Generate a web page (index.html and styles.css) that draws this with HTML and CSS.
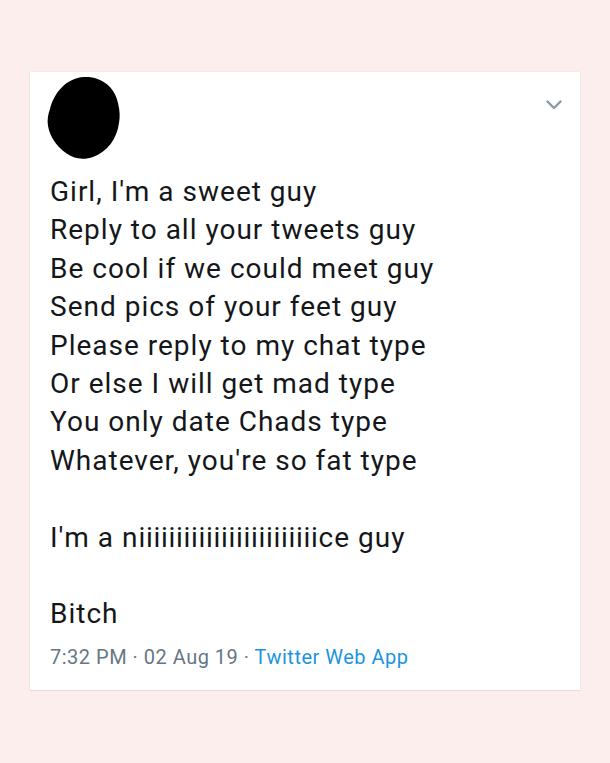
FILE: index.html
```html
<!DOCTYPE html>
<html>
<head>
<meta charset="utf-8">
<link rel="stylesheet" href="styles.css">
</head>
<body>
<div class="card">
  <div class="head">
    <svg class="avatar" width="75" height="84" viewBox="0 0 75 84">
      <path d="M37 1 C54 0 68 11 71 27 C73 35 73 41 72 47 C70 63 60 76 46 81 C38 84 30 83 24 80 C12 74 3 62 1 50 C0 44 1 38 3 33 C7 17 19 2 37 1 Z" fill="#000"/>
    </svg>
    <svg class="chevron" width="16" height="10" viewBox="0 0 16 10">
      <path d="M1.5 1.5 L8 8 L14.5 1.5" fill="none" stroke="#8899a6" stroke-width="2.4" stroke-linecap="round" stroke-linejoin="round"/>
    </svg>
  </div>
  <div class="tweet">
    <p>Girl, I'm a sweet guy</p>
    <p>Reply to all your tweets guy</p>
    <p>Be cool if we could meet guy</p>
    <p>Send pics of your feet guy</p>
    <p>Please reply to my chat type</p>
    <p>Or else I will get mad type</p>
    <p>You only date Chads type</p>
    <p>Whatever, you're so fat type</p>
    <p class="blank">&nbsp;</p>
    <p>I'm a n<span class="ii">iiiiiiiiiiiiiiiiiiiiiiii</span>ce guy</p>
    <p class="blank">&nbsp;</p>
    <p>Bitch</p>
  </div>
  <div class="meta">7:32 PM · 02 Aug 19 · <span class="source">Twitter Web App</span></div>
</div>
</body>
</html>
```
FILE: styles.css
```css
html, body {
  margin: 0;
  padding: 0;
}
body {
  background: #fdeeee;
  width: 610px;
  height: 763px;
  font-family: Roboto, "Liberation Sans", sans-serif;
  padding-top: 72px;
  box-sizing: border-box;
}
.card {
  margin-left: 30px;
  width: 550px;
  height: 618px;
  background: #ffffff;
  box-shadow: 0 0 1px rgba(0,0,0,0.12), 0 1px 1px rgba(0,0,0,0.06);
  box-sizing: border-box;
  padding: 4px 20px 0 20px;
}
.head {
  display: flex;
  justify-content: space-between;
  align-items: flex-start;
  height: 84px;
}
.avatar {
  display: block;
  margin-left: -3px;
}
.chevron {
  display: block;
  margin-top: 24px;
  margin-right: -2px;
}
.tweet {
  margin-top: 13px;
  color: #14171a;
  font-size: 28px;
  line-height: 38.4px;
  letter-spacing: 1px;
}
.tweet p {
  margin: 0;
  white-space: nowrap;
}
.ii {
  letter-spacing: 0.7px;
}
.meta {
  margin-top: 11px;
  font-size: 20px;
  line-height: 24px;
  letter-spacing: 0.5px;
  color: #657786;
}
.source {
  color: #1b95e0;
}
```
